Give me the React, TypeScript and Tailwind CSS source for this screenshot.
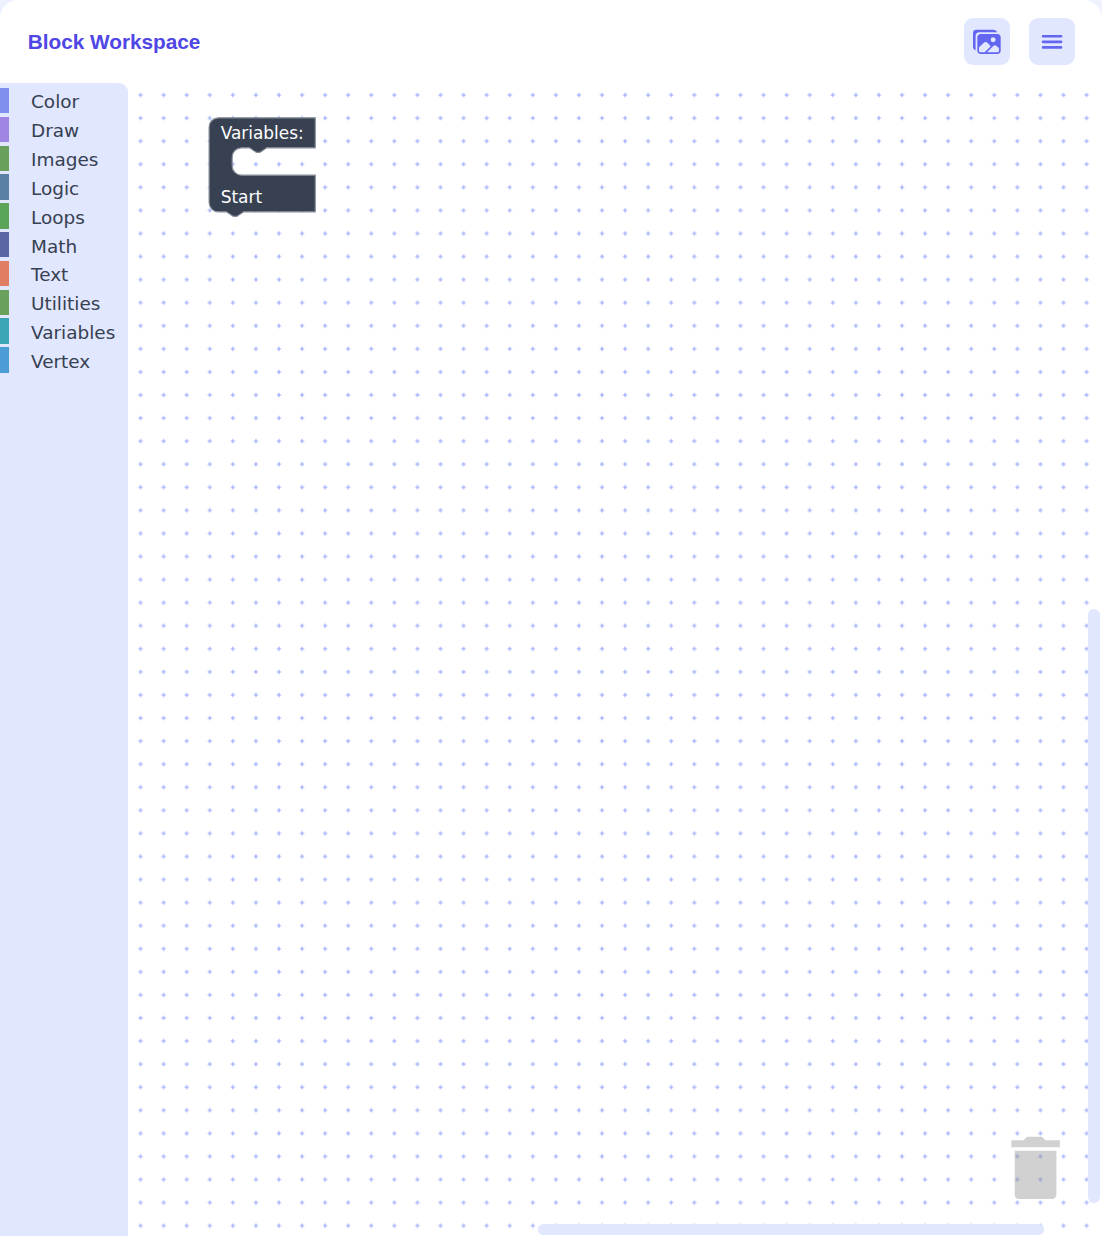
import { IoImages } from "react-icons/io5";

const categories = [
  { name: "Color", bar: "bg-[#808eee]" },
  { name: "Draw", bar: "bg-[#a086e2]" },
  { name: "Images", bar: "bg-[#69a05b]" },
  { name: "Logic", bar: "bg-[#5b80a5]" },
  { name: "Loops", bar: "bg-[#5ba55b]" },
  { name: "Math", bar: "bg-[#5b67a5]" },
  { name: "Text", bar: "bg-[#e17d63]" },
  { name: "Utilities", bar: "bg-[#69a05b]" },
  { name: "Variables", bar: "bg-[#3ba5b5]" },
  { name: "Vertex", bar: "bg-[#4b9dd5]" },
];

function Header() {
  return (
    <header className="flex h-[83px] shrink-0 items-center justify-between pl-[27.7px] pr-[27px]">
      <h1 className="font-['Liberation_Sans',sans-serif] text-[20.77px] font-bold leading-7 text-[#4f46e5]">
        Block Workspace
      </h1>
      <div className="flex gap-[19px] text-[#6366f1]">
        <button aria-label="Images" className="flex h-[47px] w-[46px] items-center justify-center rounded-[9px] bg-[#e0e7ff]">
          <IoImages className="size-[27.7px]" />
        </button>
        <button aria-label="Menu" className="flex h-[47px] w-[46px] items-center justify-center rounded-[9px] bg-[#e0e7ff]">
          <svg className="size-[27.7px]" viewBox="0 0 24 24" fill="none" stroke="currentColor" strokeWidth="2.25" strokeLinecap="round">
            <path d="M4.4 7.1h15.6M4.4 12h15.6M4.4 16.8h15.6" />
          </svg>
        </button>
      </div>
    </header>
  );
}

function Toolbox() {
  return (
    <nav className="w-32 shrink-0 rounded-tr-[9px] bg-[#e0e7ff] pt-[4.85px]">
      {categories.map((c) => (
        <div key={c.name} className="mb-[3.46px] flex h-[25.38px]">
          <div className={`h-full w-[9px] ${c.bar}`} />
          <span className="pl-[22px] pt-[1.63px] font-['DejaVu_Sans',sans-serif] text-[18.46px] leading-[25.38px] text-[#374151]">
            {c.name}
          </span>
        </div>
      ))}
    </nav>
  );
}

function Canvas() {
  return (
    <main className="relative min-w-0 flex-1 overflow-hidden">
      <svg className="absolute inset-0 size-full font-['DejaVu_Sans',sans-serif]">
        <defs>
          <pattern id="grid" x="1" y="0.5" width="23.074" height="23.074" patternUnits="userSpaceOnUse">
            <path d="M9.3 11.54h4.48M11.54 9.3v4.48" stroke="#98a8fb" strokeWidth="1.15" />
          </pattern>
        </defs>
        <rect width="100%" height="100%" fill="url(#grid)" />
        <g transform="translate(81.1 34.8) scale(1.1538)">
          <path
            d="M0 8A8 8 0 0 1 8 0H92V26H50l-6 4h-3l-6-4h-7a8 8 0 0 0-8 8v7.7a8 8 0 0 0 8 8H92V81.5H30l-6 4h-3l-6-4H8a8 8 0 0 1-8-8z"
            fill="#374151"
            stroke="#878d97"
            strokeWidth="1"
          />
          <g fill="#fff" fontSize="14.67">
            <text x="10" y="18.3" textLength="72" lengthAdjust="spacingAndGlyphs">Variables:</text>
            <text x="10" y="73.8" textLength="36" lengthAdjust="spacingAndGlyphs">Start</text>
          </g>
        </g>
        <g fill="#8b8b8b" fillOpacity="0.4">
          <path d="M883.3 1057.2h12.2l3.5-3.4h15l3.5 3.4h14.4v7.1h-48.6z" />
          <path d="M886.7 1067.8h41.7v43.8a4.3 4.3 0 0 1-4.3 4.3h-33.1a4.3 4.3 0 0 1-4.3-4.3z" />
        </g>
      </svg>
      <div className="absolute bottom-[33px] right-[2px] h-[594px] w-[12px] rounded-full bg-[#e0e7ff]" />
      <div className="absolute bottom-[1px] right-[58px] h-[11px] w-[506px] rounded-full bg-[#e0e7ff]" />
    </main>
  );
}

export default function App() {
  return (
    <div className="h-[1236px] w-[1102px] overflow-hidden bg-[#eef2ff]">
      <div className="flex h-full flex-col rounded-t-[18.5px] bg-white">
        <Header />
        <div className="flex min-h-0 flex-1">
          <Toolbox />
          <Canvas />
        </div>
      </div>
    </div>
  );
}
